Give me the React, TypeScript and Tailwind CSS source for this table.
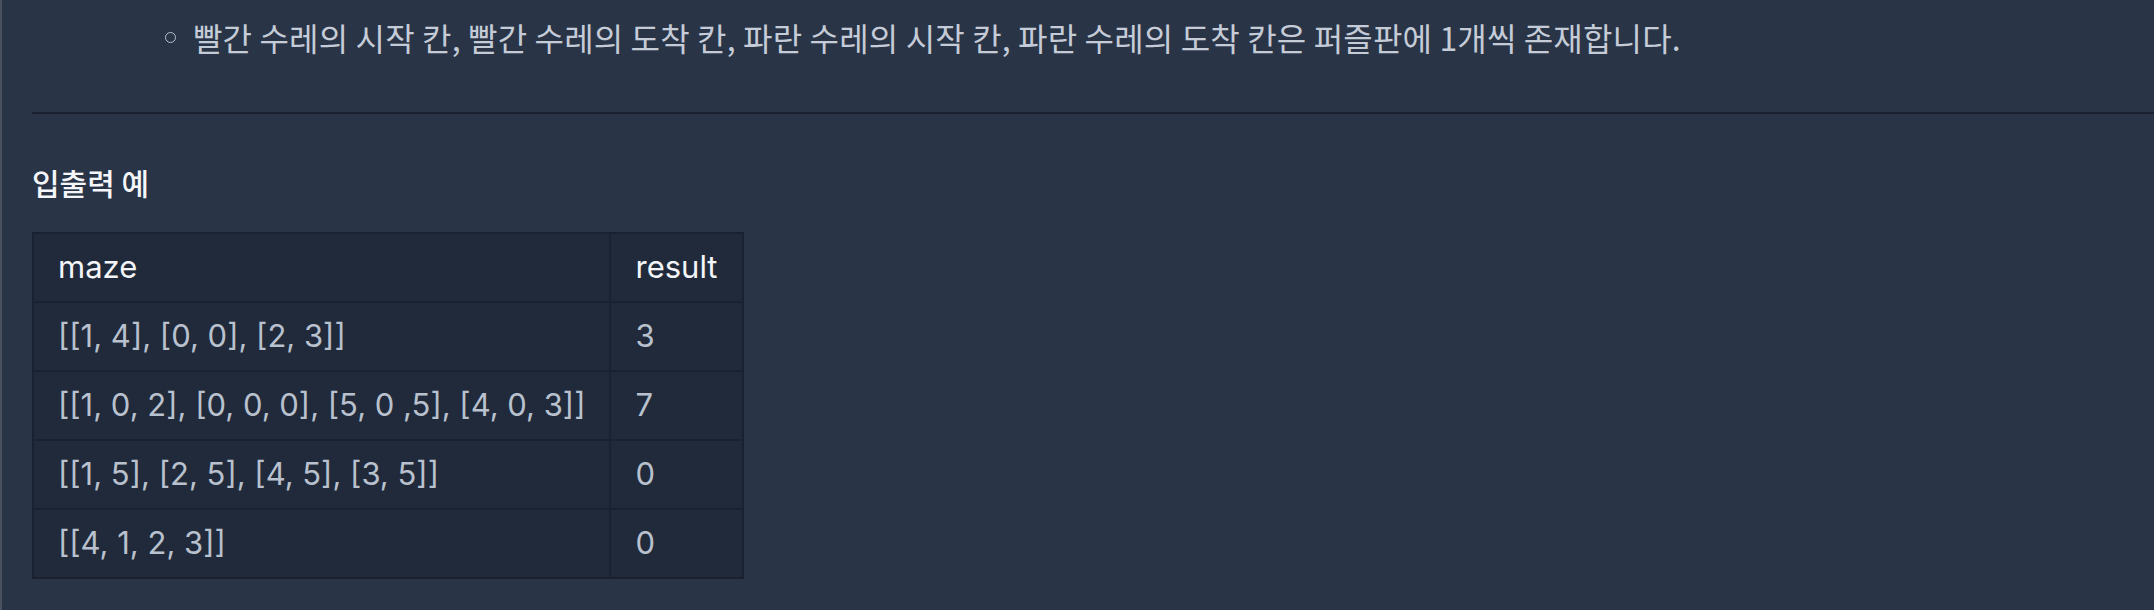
import React from "react";

const rows: [string, string][] = [
  ["[[1, 4], [0, 0], [2, 3]]", "3"],
  ["[[1, 0, 2], [0, 0, 0], [5, 0 ,5], [4, 0, 3]]", "7"],
  ["[[1, 5], [2, 5], [4, 5], [3, 5]]", "0"],
  ["[[4, 1, 2, 3]]", "0"],
];

export default function App() {
  return (
    <div className="min-h-screen w-full bg-[#293547] border-l-2 border-[#4a5260] pl-[30px] font-['Inter','Noto_Sans_CJK_KR',sans-serif]">
      <ul className="pt-[15px]">
        <li className="flex items-center pl-[133px] h-[45px]">
          <span className="w-[11px] h-[11px] rounded-full border border-[#b8c1cd] mr-[17px] shrink-0" />
          <span className="text-[32px] leading-[45px] tracking-[0.15px] text-[#c5ccd7] font-['Noto_Sans_CJK_KR',sans-serif] whitespace-nowrap">
            빨간 수레의 시작 칸, 빨간 수레의 도착 칸, 파란 수레의 시작 칸, 파란 수레의 도착 칸은 퍼즐판에 1개씩 존재합니다.
          </span>
        </li>
      </ul>
      <hr className="mt-[52px] border-0 h-[2px] bg-[#1b2130]" />
      <h5 className="mt-[48px] text-[30px] leading-[40px] font-medium text-[#f4f6f9] font-['Noto_Sans_CJK_KR',sans-serif]">
        입출력 예
      </h5>
      <table className="mt-[30px] border-collapse border-2 border-[#1a2130] bg-[#212a3b] font-['Inter','Noto_Sans_CJK_KR',sans-serif]">
        <thead>
          <tr>
            <th className="border-2 border-[#1a2130] px-[24px] h-[69px] text-left font-normal text-[31px] text-[#f3f5f8]">maze</th>
            <th className="border-2 border-[#1a2130] px-[24px] h-[69px] text-left font-normal text-[31px] text-[#f3f5f8]">result</th>
          </tr>
        </thead>
        <tbody>
          {rows.map(([m, r], i) => (
            <tr key={i}>
              <td className="border-2 border-[#1a2130] px-[24px] h-[69px] text-[31px] text-[#b8c1cd] whitespace-nowrap">{m}</td>
              <td className="border-2 border-[#1a2130] px-[24px] h-[69px] text-[31px] text-[#b8c1cd]">{r}</td>
            </tr>
          ))}
        </tbody>
      </table>
    </div>
  );
}
